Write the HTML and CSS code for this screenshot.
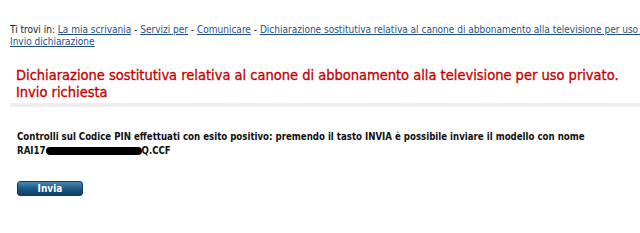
FILE: index.html
```html
<!DOCTYPE html>
<html lang="it">
<head>
  <meta charset="UTF-8" />
  <title>Invio dichiarazione</title>
  <link rel="stylesheet" href="styles.css">
</head>
<body>
  <div class="page">
    <div class="breadcrumb">
      <div class="crumbs">Ti trovi in: <a href="#">La mia scrivania</a> - <a href="#">Servizi per</a> - <a href="#">Comunicare</a> - <a href="#">Dichiarazione sostitutiva relativa al canone di abbonamento alla televisione per uso privato</a> -</div>
      <a href="#">Invio dichiarazione</a>
    </div>
    <h1 class="title">Dichiarazione sostitutiva relativa al canone di abbonamento alla televisione per uso privato.<br>Invio richiesta</h1>
    <div class="content">
      <p class="esito">Controlli sul Codice PIN effettuati con esito positivo: premendo il tasto INVIA è possibile inviare il modello con nome<br>RAI17<span class="redacted"></span>Q.CCF</p>
      <button class="btn-invia">Invia</button>
    </div>
  </div>
</body>
</html>
```
FILE: styles.css
```css
body { margin: 0; padding: 0; background: #fff; font-family: "DejaVu Sans Condensed", "DejaVu Sans", sans-serif; color: #222; }
.page { width: 640px; padding-top: 24px; overflow: hidden; }
.breadcrumb { font-size: 10px; line-height: 12px; padding-left: 10px; }
.breadcrumb .crumbs { white-space: nowrap; overflow: hidden; }
.breadcrumb a { color: #1f4f86; text-decoration: underline; }
.title { margin: 19px 0 0 10px; padding: 0 0 2px 6px; font-size: 14.5px; line-height: 17px; font-weight: normal; color: #c40000; -webkit-text-stroke: 0.3px #c40000; border-bottom: 4px solid #eeeeee; }
.content { padding: 23px 0 0 17px; }
.esito { margin: 0; font-size: 9.6px; line-height: 14px; font-weight: bold; color: #111; }
.redacted { display: inline-block; width: 96px; height: 8px; background: #000; border-radius: 4px; vertical-align: middle; }
.btn-invia { margin-top: 23px; width: 66px; height: 15px; padding: 0; border: 1px solid #0e3c5e; border-radius: 3px; background: linear-gradient(#4a86b3, #1e5a86 50%, #0f3f66); color: #fff; font-family: inherit; font-size: 10px; font-weight: bold; line-height: 13px; }
```
